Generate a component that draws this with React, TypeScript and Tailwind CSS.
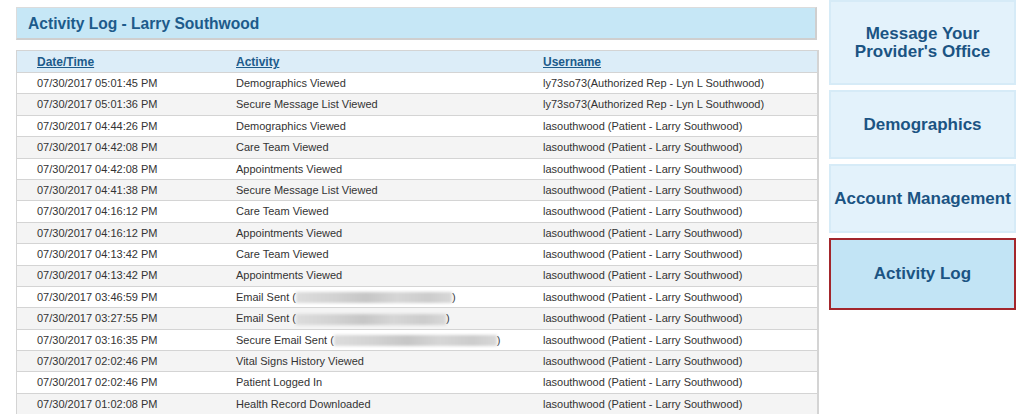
import React from "react";

type Entry = { time: string; activity: React.ReactNode; user: string };

const Blur = ({ w }: { w: number }) => (
  <span
    className="inline-block h-[11px] align-middle bg-[linear-gradient(90deg,#dcdcdc,#d2d2d2_25%,#c6c6c6_45%,#d6d6d6_65%,#cccccc_85%,#d8d8d8)] blur-[1.5px]"
    style={{ width: w }}
  />
);

const rep = "ly73so73(Authorized Rep - Lyn L Southwood)";
const pat = "lasouthwood (Patient - Larry Southwood)";

const entries: Entry[] = [
  { time: "07/30/2017 05:01:45 PM", activity: "Demographics Viewed", user: rep },
  { time: "07/30/2017 05:01:36 PM", activity: "Secure Message List Viewed", user: rep },
  { time: "07/30/2017 04:44:26 PM", activity: "Demographics Viewed", user: pat },
  { time: "07/30/2017 04:42:08 PM", activity: "Care Team Viewed", user: pat },
  { time: "07/30/2017 04:42:08 PM", activity: "Appointments Viewed", user: pat },
  { time: "07/30/2017 04:41:38 PM", activity: "Secure Message List Viewed", user: pat },
  { time: "07/30/2017 04:16:12 PM", activity: "Care Team Viewed", user: pat },
  { time: "07/30/2017 04:16:12 PM", activity: "Appointments Viewed", user: pat },
  { time: "07/30/2017 04:13:42 PM", activity: "Care Team Viewed", user: pat },
  { time: "07/30/2017 04:13:42 PM", activity: "Appointments Viewed", user: pat },
  {
    time: "07/30/2017 03:46:59 PM",
    activity: (
      <>
        Email Sent (<Blur w={156} />)
      </>
    ),
    user: pat,
  },
  {
    time: "07/30/2017 03:27:55 PM",
    activity: (
      <>
        Email Sent (<Blur w={150} />)
      </>
    ),
    user: pat,
  },
  {
    time: "07/30/2017 03:16:35 PM",
    activity: (
      <>
        Secure Email Sent (<Blur w={163} />)
      </>
    ),
    user: pat,
  },
  { time: "07/30/2017 02:02:46 PM", activity: "Vital Signs History Viewed", user: pat },
  { time: "07/30/2017 02:02:46 PM", activity: "Patient Logged In", user: pat },
  { time: "07/30/2017 01:02:08 PM", activity: "Health Record Downloaded", user: pat },
];

const navItems = [
  { label: "Message Your\nProvider's Office", h: "h-[85px]", active: false },
  { label: "Demographics", h: "h-[69px]", active: false },
  { label: "Account Management", h: "h-[69px]", active: false },
  { label: "Activity Log", h: "h-[72px]", active: true },
];

export default function App() {
  return (
    <div className="flex h-[414px] w-[1032px] overflow-hidden bg-white font-['Liberation_Sans',Arial,sans-serif]">
      <div className="ml-[16px] w-[803px] shrink-0 pt-[7px]">
        <div className="flex h-[33px] w-[801px] items-center border-t border-l border-b-2 border-r-2 border-t-[#dcdcdc] border-l-[#dcdcdc] border-b-[#cfcfcf] border-r-[#cfcfcf] bg-[#c6e7f6] pl-[11px] pt-[1px] text-[15.6px] font-bold text-[#1d5b8b]">
          Activity Log - Larry Southwood
        </div>

        <div className="mt-[10px] border-t border-l border-r-2 border-[#d4d4d4]">
          <div className="flex h-[22px] items-center border-b border-[#d4d4d4] bg-[#dcedf8] pt-[1px] text-[12px] font-bold text-[#1d5b8b] underline">
            <div className="w-[219px] pl-[20px]">Date/Time</div>
            <div className="w-[307px]">Activity</div>
            <div>Username</div>
          </div>
          {entries.map((e, i) => (
            <div
              key={i}
              className={`flex h-[21.4px] items-center border-b border-[#d4d4d4] text-[11px] text-[#333] ${
                i % 2 === 1 ? "bg-[#f4f4f4]" : "bg-white"
              }`}
            >
              <div className="w-[219px] pl-[20px]">{e.time}</div>
              <div className="w-[307px] whitespace-nowrap">{e.activity}</div>
              <div className="whitespace-nowrap">{e.user}</div>
            </div>
          ))}
        </div>
      </div>

      <div className="ml-[10px] flex w-[187px] shrink-0 flex-col gap-[5px]">
        {navItems.map((n) => (
          <div
            key={n.label}
            className={`flex ${n.h} items-center justify-center whitespace-pre-line text-center text-[17px] font-bold leading-[18px] text-[#1b5483] ${
              n.active
                ? "border-2 border-[#a3262c] bg-[#c2e4f5]"
                : "border-2 border-[#d6ebf7] bg-[#e3f2fb]"
            }`}
          >
            {n.label}
          </div>
        ))}
      </div>
    </div>
  );
}
